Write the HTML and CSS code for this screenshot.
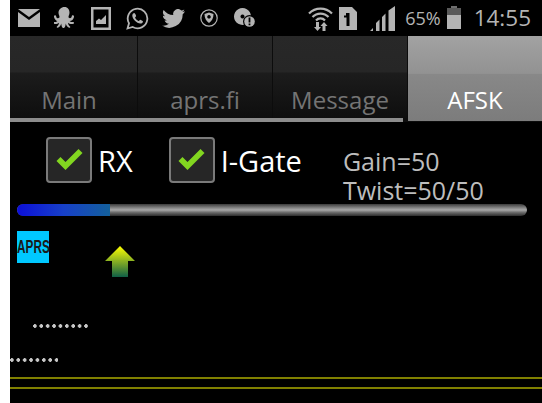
FILE: index.html
```html
<!DOCTYPE html>
<html lang="en">
<head>
  <meta charset="UTF-8">
  <title>APRSdroid AFSK</title>
  <link rel="stylesheet" href="styles.css">
</head>
<body>
  <div class="screen">

    <!-- Status bar -->
    <div class="status-bar">
      <div class="status-left">
        <svg class="ic" width="22" height="18" viewBox="0 0 22 18"><path d="M0 0h22L11 8z M0 3l11 8 11-8v15H0z"/></svg>
        <svg class="ic ic-octo" width="21" height="22" viewBox="0 0 21 22"><path d="M10.500 0c3.300 0 5 2.500 5 5.500 0 2-1 3.300-1 4.500 0 1 1.500 1.500 2.500 .8 1-.7.500-2 1.300-2.500 1-.5 1.900.4 1.700 1.600-.4 2.300-2.200 4-4.500 4.100 1 1 2.700 1.200 3.700 1.100.9 0 1.200 1.200.3 1.600-2 .8-4.300.2-5.500-1 .2 1.700 1 3 2 3.800.7.600.1 1.600-.8 1.300-2-.7-3.100-2.700-3.400-4.300-.3 1.800-.6 4.500-2.300 4.500s-2-2.700-2.300-4.500c-.3 1.600-1.400 3.600-3.400 4.300-.9.300-1.500-.7-.8-1.300 1-.8 1.800-2.100 2-3.800-1.200 1.200-3.500 1.800-5.500 1-.9-.4-.6-1.600.3-1.600 1 .1 2.700-.1 3.700-1.100C2.200 14 .4 12.300 0 10c-.2-1.200.7-2.100 1.700-1.600.8.500.3 1.800 1.300 2.500 1 .7 2.500.2 2.500-.8 0-1.200-1-2.500-1-4.500C4.500 2.500 7.200 0 10.500 0z"/></svg>
        <svg class="ic" width="20" height="23" viewBox="0 0 20 23"><path fill-rule="evenodd" d="M0 0h20v23H0z M2.500 2.500v18h15v-18z M5 17v-3l3-2.500 2 1.500 5-5v9z"/></svg>
        <svg class="ic" width="23" height="23" viewBox="0 0 23 23"><path fill="none" stroke="#b4b4b4" stroke-width="1.800" d="M1.500 21.500l1.500-5.200a9.800 9.800 0 1 1 3.700 3.700z"/><path d="M8.300 6c-1 0-2 1.200-2 2.600 0 3.300 4.400 8 8 8 1.500 0 2.700-1 2.700-2.100 0-.5-2.300-1.700-2.700-1.700-.5 0-1 1.200-1.500 1.200-1 0-3.700-2.500-3.700-3.500 0-.5 1-1 1-1.500C10.100 8.500 9 6 8.300 6z"/></svg>
        <svg class="ic ic-bird" width="23" height="19" viewBox="0 0 23 19"><path d="M23 2.300c-.8.400-1.800.6-2.700.8 1-.6 1.700-1.500 2-2.600-.9.500-1.900.9-3 1.100A4.700 4.700 0 0 0 11.300 6C7.400 5.800 4 4 1.600.900c-1.300 2.200-.6 4.800 1.400 6.300-.8 0-1.500-.2-2.100-.6 0 2.300 1.600 4.200 3.800 4.700-.7.200-1.400.2-2.100.1.600 1.900 2.300 3.200 4.400 3.300A9.500 9.500 0 0 1 0 16.600 13.400 13.400 0 0 0 20.700 5.300c.9-.7 1.700-1.900 2.300-3z"/></svg>
        <svg class="ic" width="18" height="18" viewBox="0 0 18 18"><circle cx="9" cy="9" r="8.200" fill="none" stroke="#b4b4b4" stroke-width="1.200"/><path fill-rule="evenodd" d="M9 3.500l4.500 1.500c0 4-1.500 7-4.500 9-3-2-4.500-5-4.500-9z M9 6a1.800 1.800 0 1 0 .01 0z"/></svg>
        <svg class="ic ic-disc" width="22" height="20" viewBox="0 0 22 20"><path fill-rule="evenodd" d="M8.500 0a8.500 8.500 0 1 1-.01 0z M8.500 6.500a2 2 0 1 0 .01 0z"/><circle cx="15.500" cy="13.500" r="6.500" fill="#000"/><circle cx="15.500" cy="13.500" r="5.300"/><path d="M14.600 9.500h1.800v5h-1.800z M14.600 15.500h1.800v1.800h-1.800z" fill="#000"/></svg>
      </div>
      <div class="status-right">
        <svg class="ic" width="25" height="26" viewBox="0 0 25 26"><path fill="none" stroke="#b4b4b4" stroke-width="2.200" d="M1 8.500a16 16 0 0 1 23 0 M4.500 12a11 11 0 0 1 16 0 M8 15.500a6 6 0 0 1 9 0"/><path d="M8 17h3v5h2l-3.500 4-3.500-4h2z M16 17l3.500 4h-2v5h-3v-5h-2z"/></svg>
        <svg class="ic ic-sim" width="18" height="23" viewBox="0 0 18 23"><path fill-rule="evenodd" d="M0 0h13l5 5v18H0z M7 6v2.500H5v2h2.500V19h3V6z"/></svg>
        <svg class="ic ic-signal" width="25" height="25" viewBox="0 0 25 25"><path d="M0 25l3-3v3z M6 25v-8l3.500-3.500V25z M12 25V11l3.500-3.500V25z M18.500 25V4.500L25 0v25z"/></svg>
        <span class="batt-text">65%</span>
        <div class="battery"><div class="batt-cap"></div><div class="batt-body"><div class="batt-fill"></div></div></div>
        <span class="clock">14:55</span>
      </div>
    </div>

    <!-- Tabs -->
    <div class="tabs">
      <div class="tab first">Main</div>
      <div class="tab">aprs.fi</div>
      <div class="tab">Message</div>
      <div class="tab active">AFSK</div>
    </div>

    <!-- Controls -->
    <div class="controls">
      <label class="check">
        <span class="box"><svg width="27" height="22" viewBox="0 0 26 22"><path fill="#82d620" d="M0 12l4-4 5 5L22 0l4 4L9 21z"/></svg></span>
        <span class="check-label">RX</span>
      </label>
      <label class="check">
        <span class="box"><svg width="27" height="22" viewBox="0 0 26 22"><path fill="#82d620" d="M0 12l4-4 5 5L22 0l4 4L9 21z"/></svg></span>
        <span class="check-label">I-Gate</span>
      </label>
      <div class="levels">Gain=50<br>Twist=50/50</div>
    </div>

    <div class="progress"><div class="progress-bar"></div></div>

    <!-- Packet canvas -->
    <div class="canvas">
      <div class="aprs-icon"><span class="aprs-text">APRS</span></div>
      <svg class="arrow" width="30" height="31" viewBox="0 0 30 31">
        <defs><linearGradient id="arrowfill" x1="0" y1="0" x2="0" y2="1"><stop offset="0" stop-color="#ffff00"/><stop offset="1" stop-color="#0f5f46"/></linearGradient></defs>
        <path fill="url(#arrowfill)" d="M15 0l15 15h-7v16H7V15H0z"/>
      </svg>
      <div class="dots dots-a"></div>
      <div class="dots dots-b"></div>
      <div class="line line-a"></div>
      <div class="line line-b"></div>
    </div>

  </div>
</body>
</html>
```

FILE: styles.css
```css
body {
  margin: 0;
  background: white;
  font-family: "Open Sans", sans-serif;
  overflow: hidden;
}

.screen {
  margin-left: 10px;
  width: 532px;
  height: 403px;
  background: black;
  display: flex;
  flex-direction: column;
  overflow: hidden;
}

/* Status bar */
.status-bar {
  height: 36px;
  flex: none;
  display: flex;
  justify-content: space-between;
  align-items: center;
  color: #b4b4b4;
}

.ic {
  fill: #b4b4b4;
  display: block;
  flex: none;
}

.status-left {
  display: flex;
  align-items: center;
  gap: 15px;
  padding-left: 8px;
}

.ic-octo {
  margin: 0 1px 0 -1px;
}

.ic-bird {
  margin-left: -2px;
}

.ic-disc {
  margin-left: 1px;
}

.status-right {
  display: flex;
  align-items: center;
  padding-right: 11px;
}

.ic-sim {
  margin-left: 6px;
}

.ic-signal {
  margin-left: 13px;
}

.batt-text {
  font-size: 18px;
  margin-left: 10px;
}

.battery {
  width: 14px;
  height: 23px;
  margin: 0 0 2px 6px;
  display: flex;
  flex-direction: column;
  align-items: center;
}

.batt-cap {
  width: 6px;
  height: 2px;
  background: #6e6e6e;
}

.batt-body {
  flex: 1;
  width: 14px;
  background: #5a5a5a;
  display: flex;
  align-items: flex-end;
}

.batt-fill {
  width: 100%;
  height: 65%;
  background: #b4b4b4;
}

.clock {
  font-size: 22.5px;
  margin: 0 0 2px 13px;
}

/* Tabs */
.tabs {
  height: 86px;
  flex: none;
  display: flex;
  gap: 1px;
  background: linear-gradient(#8c8c8c, #8c8c8c) left bottom / 393px 4px no-repeat #0c0c0c;
}

.tab {
  flex: 1;
  height: 82px;
  display: flex;
  align-items: flex-end;
  justify-content: center;
  padding-bottom: 2px;
  box-sizing: border-box;
  font-size: 24px;
  color: #747474;
  background: linear-gradient(#282828, #262626 44%, #1c1c1c 45%, #0e0e0e);
}

.tab.first {
  flex: none;
  width: 127px;
  padding-right: 9px;
}

.tab.active {
  height: 85px;
  padding-bottom: 5px;
  padding-left: 0;
  color: white;
  background: linear-gradient(#a2a2a2, #929292 44%, #888888 45%, #7c7c7c);
}

/* Controls */
.controls {
  height: 82px;
  flex: none;
  display: flex;
  align-items: flex-start;
  padding: 15px 0 0 36px;
  box-sizing: border-box;
}

.check {
  display: flex;
  align-items: center;
  gap: 6px;
  color: white;
  font-size: 29px;
  margin-right: 36px;
}

.box {
  width: 46px;
  height: 46px;
  box-sizing: border-box;
  border: 2px solid #7a7a7a;
  border-radius: 4px;
  background: #262626;
  display: flex;
  align-items: center;
  justify-content: center;
}

.levels {
  color: #bdbdbd;
  font-size: 25px;
  line-height: 29px;
  margin: 10px 0 0 5px;
  white-space: nowrap;
}

/* Progress bar */
.progress {
  height: 12px;
  flex: none;
  margin: 0 15px 0 7px;
  border-radius: 6px;
  overflow: hidden;
  background: linear-gradient(#3a3a3a, #8a8a8a 35%, #a8a8a8 50%, #6c6c6c 70%, #2c2c2c);
}

.progress-bar {
  width: 93px;
  height: 100%;
  background: linear-gradient(to right, #0c0fd8, #1740c8 50%, #13609c);
}

/* Packet canvas */
.canvas {
  flex: 1;
  position: relative;
}

.aprs-icon {
  position: absolute;
  left: 7px;
  top: 15px;
  width: 32px;
  height: 32px;
  background: #00c8ff;
  display: flex;
  align-items: center;
  justify-content: center;
}

.aprs-text {
  color: #1a1a1a;
  font-family: "Liberation Sans", sans-serif;
  font-size: 19px;
  font-weight: 700;
  transform: scaleX(0.62);
}

.arrow {
  position: absolute;
  left: 95px;
  top: 30px;
}

.dots {
  position: absolute;
  height: 4px;
  background: radial-gradient(circle at 2px 2px, #c8c8c8 1.6px, transparent 2px) 0 0 / 6.4px 4px repeat-x;
}

.dots-a {
  left: 23px;
  top: 108px;
  width: 55px;
}

.dots-b {
  left: 0;
  top: 142px;
  width: 48px;
}

.line {
  position: absolute;
  left: 0;
  right: 0;
  height: 2px;
  background: #808000;
}

.line-a {
  top: 161px;
}

.line-b {
  top: 171px;
}
```
